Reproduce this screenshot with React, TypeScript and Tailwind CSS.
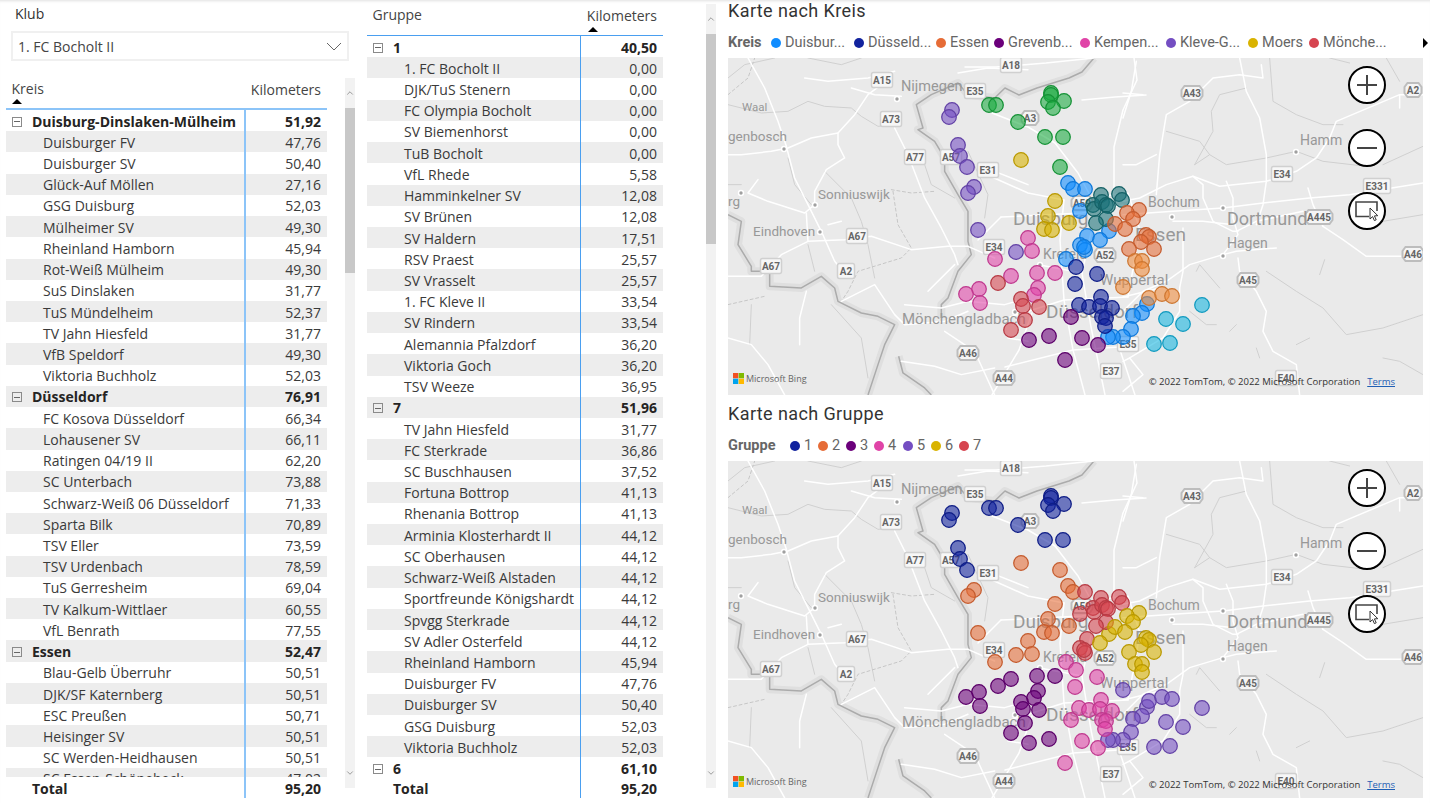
import { Fragment } from 'react';
import { ChevronDown, ChevronUp } from 'lucide-react';

type Row = { name: string; km: string; group?: boolean };

const g = (name: string, km: string): Row => ({ name, km, group: true });
const c = (name: string, km: string): Row => ({ name, km });

const kreisRows: Row[] = [
  g('Duisburg-Dinslaken-Mülheim', '51,92'),
  c('Duisburger FV', '47,76'),
  c('Duisburger SV', '50,40'),
  c('Glück-Auf Möllen', '27,16'),
  c('GSG Duisburg', '52,03'),
  c('Mülheimer SV', '49,30'),
  c('Rheinland Hamborn', '45,94'),
  c('Rot-Weiß Mülheim', '49,30'),
  c('SuS Dinslaken', '31,77'),
  c('TuS Mündelheim', '52,37'),
  c('TV Jahn Hiesfeld', '31,77'),
  c('VfB Speldorf', '49,30'),
  c('Viktoria Buchholz', '52,03'),
  g('Düsseldorf', '76,91'),
  c('FC Kosova Düsseldorf', '66,34'),
  c('Lohausener SV', '66,11'),
  c('Ratingen 04/19 II', '62,20'),
  c('SC Unterbach', '73,88'),
  c('Schwarz-Weiß 06 Düsseldorf', '71,33'),
  c('Sparta Bilk', '70,89'),
  c('TSV Eller', '73,59'),
  c('TSV Urdenbach', '78,59'),
  c('TuS Gerresheim', '69,04'),
  c('TV Kalkum-Wittlaer', '60,55'),
  c('VfL Benrath', '77,55'),
  g('Essen', '52,47'),
  c('Blau-Gelb Überruhr', '50,51'),
  c('DJK/SF Katernberg', '50,51'),
  c('ESC Preußen', '50,71'),
  c('Heisinger SV', '50,51'),
  c('SC Werden-Heidhausen', '50,51'),
  c('SC Essen-Schönebeck', '47,02'),
];

const gruppeRows: Row[] = [
  g('1', '40,50'),
  c('1. FC Bocholt II', '0,00'),
  c('DJK/TuS Stenern', '0,00'),
  c('FC Olympia Bocholt', '0,00'),
  c('SV Biemenhorst', '0,00'),
  c('TuB Bocholt', '0,00'),
  c('VfL Rhede', '5,58'),
  c('Hamminkelner SV', '12,08'),
  c('SV Brünen', '12,08'),
  c('SV Haldern', '17,51'),
  c('RSV Praest', '25,57'),
  c('SV Vrasselt', '25,57'),
  c('1. FC Kleve II', '33,54'),
  c('SV Rindern', '33,54'),
  c('Alemannia Pfalzdorf', '36,20'),
  c('Viktoria Goch', '36,20'),
  c('TSV Weeze', '36,95'),
  g('7', '51,96'),
  c('TV Jahn Hiesfeld', '31,77'),
  c('FC Sterkrade', '36,86'),
  c('SC Buschhausen', '37,52'),
  c('Fortuna Bottrop', '41,13'),
  c('Rhenania Bottrop', '41,13'),
  c('Arminia Klosterhardt II', '44,12'),
  c('SC Oberhausen', '44,12'),
  c('Schwarz-Weiß Alstaden', '44,12'),
  c('Sportfreunde Königshardt', '44,12'),
  c('Spvgg Sterkrade', '44,12'),
  c('SV Adler Osterfeld', '44,12'),
  c('Rheinland Hamborn', '45,94'),
  c('Duisburger FV', '47,76'),
  c('Duisburger SV', '50,40'),
  c('GSG Duisburg', '52,03'),
  c('Viktoria Buchholz', '52,03'),
  g('6', '61,10'),
];

const BLUE = '#118DFF';
const NAVY = '#12239E';
const ORANGE = '#E66C37';
const PURPLE = '#6B007B';
const PINK = '#E044A7';
const VIOLET = '#744EC2';
const GOLD = '#D9B300';
const RED = '#D64550';
const TEAL = '#197278';
const GREEN = '#1AAB40';
const PEACH = '#F08C3C';
const CYAN = '#15B5E0';

// x, y in screen coordinates of the upper map, colour by Kreis, colour by Gruppe
const points: [number, number, string, string][] = [
  [952, 110, VIOLET, NAVY], [949, 117, VIOLET, NAVY], [958, 145, VIOLET, NAVY], [960, 156, VIOLET, NAVY],
  [967, 167, VIOLET, NAVY], [974, 187, VIOLET, ORANGE], [968, 193, VIOLET, ORANGE], [978, 230, VIOLET, ORANGE],
  [1016, 252, VIOLET, ORANGE],
  [1051, 93, GREEN, NAVY], [1051, 95, GREEN, NAVY], [1048, 102, GREEN, NAVY], [1064, 101, GREEN, NAVY],
  [1053, 108, GREEN, NAVY], [989, 105, GREEN, NAVY], [996, 105, GREEN, NAVY], [1018, 122, GREEN, NAVY],
  [1045, 137, GREEN, NAVY], [1063, 137, GREEN, NAVY], [1060, 167, GREEN, ORANGE],
  [1021, 160, GOLD, ORANGE], [1055, 201, GOLD, ORANGE], [1048, 216, GOLD, ORANGE], [1069, 223, GOLD, ORANGE],
  [1044, 229, GOLD, ORANGE], [1052, 230, GOLD, ORANGE],
  [1068, 183, BLUE, ORANGE], [1073, 189, BLUE, ORANGE], [1085, 189, BLUE, RED], [1080, 211, BLUE, RED],
  [1109, 231, BLUE, GOLD], [1087, 236, BLUE, RED], [1100, 240, BLUE, GOLD], [1080, 245, BLUE, RED],
  [1085, 250, BLUE, RED], [1084, 247, BLUE, RED], [1066, 259, BLUE, PINK],
  [1147, 304, BLUE, VIOLET], [1142, 313, BLUE, VIOLET], [1133, 316, BLUE, VIOLET], [1131, 329, BLUE, VIOLET],
  [1123, 337, BLUE, VIOLET], [1113, 337, BLUE, VIOLET], [1108, 337, BLUE, VIOLET],
  [1101, 195, TEAL, RED], [1119, 194, TEAL, RED], [1122, 200, TEAL, RED], [1093, 205, TEAL, RED],
  [1094, 209, TEAL, RED], [1102, 202, TEAL, RED], [1106, 205, TEAL, RED], [1108, 206, TEAL, RED],
  [1106, 219, TEAL, RED], [1096, 223, TEAL, RED],
  [1139, 210, ORANGE, GOLD], [1127, 213, ORANGE, GOLD], [1133, 219, ORANGE, GOLD], [1115, 224, ORANGE, GOLD],
  [1125, 229, ORANGE, GOLD], [1146, 235, ORANGE, GOLD], [1149, 237, ORANGE, GOLD], [1141, 242, ORANGE, GOLD],
  [1129, 249, ORANGE, GOLD], [1154, 249, ORANGE, GOLD],
  [1135, 261, PEACH, GOLD], [1142, 261, PEACH, GOLD], [1142, 269, PEACH, GOLD], [1123, 287, PEACH, VIOLET],
  [1149, 298, PEACH, VIOLET], [1162, 294, PEACH, VIOLET], [1172, 296, PEACH, VIOLET],
  [1202, 305, CYAN, VIOLET], [1166, 319, CYAN, VIOLET], [1183, 324, CYAN, VIOLET], [1154, 344, CYAN, VIOLET],
  [1170, 343, CYAN, VIOLET],
  [1076, 267, NAVY, PINK], [1097, 274, NAVY, PINK], [1075, 284, NAVY, PINK], [1101, 297, NAVY, PINK],
  [1079, 305, NAVY, PINK], [1089, 307, NAVY, PINK], [1100, 306, NAVY, PINK], [1112, 308, NAVY, PINK],
  [1102, 317, NAVY, PINK], [1106, 318, NAVY, PINK], [1105, 326, NAVY, PINK],
  [1071, 317, PURPLE, PINK], [1049, 336, PURPLE, PURPLE], [1029, 340, PURPLE, PURPLE], [1082, 338, PURPLE, PINK],
  [1098, 345, PURPLE, PINK], [1065, 360, PURPLE, PINK],
  [1028, 238, PINK, ORANGE], [1032, 251, PINK, ORANGE], [995, 259, PINK, ORANGE], [1011, 276, PINK, PURPLE],
  [1037, 273, PINK, PURPLE], [1055, 273, PINK, PURPLE], [1038, 288, PINK, PURPLE], [1034, 295, PINK, PURPLE],
  [979, 289, PINK, PURPLE], [966, 294, PINK, PURPLE], [980, 303, PINK, PURPLE],
  [998, 283, RED, PURPLE], [1021, 299, RED, PURPLE], [1023, 306, RED, PURPLE], [1039, 307, RED, PURPLE],
  [1025, 320, RED, PURPLE], [1011, 330, RED, PURPLE],
];

// map lines are traced at 3x: west half starts at 728,58 and east half at 1123,58
const westBorders = [
  '0,470 40,490 30,560 70,625 70,640 125,640 125,685 220,690 280,655 320,690 330,730 400,765 450,775 500,800 470,860 450,920 420,1011',
  '512,895 525,945 590,990 610,1011',
  '1098,0 1062,42 1023,60 927,90 873,111 831,90 800,120 720,110 690,75 610,110 565,140 585,210 570,215 620,250 650,300 650,340 690,410 720,460 720,550 730,590 690,640 660,720 640,740 640,780',
];

const westRoads = [
  '60,0 110,90 150,190 175,265 200,360 240,440 280,520 320,610 345,640',
  '460,80 420,110 380,170 330,225 250,240 180,270 130,280 40,290 0,290',
  '330,225 330,260 350,300 295,335 260,400 260,440',
  '260,440 230,465 120,430 60,405 90,365',
  '0,655 100,655 160,590 240,550 350,545 430,535 550,575 660,565 720,565',
  '500,210 540,290 590,420 640,510 680,590 690,620',
  '235,465 240,550',
  '370,90 440,110 520,115',
  '235,700 215,780 215,860',
  '340,730 440,680 500,770 530,800 650,790 720,760',
  '0,840 70,860 120,920 170,1011',
  '530,740 640,750 720,730 830,740 900,720',
  '600,700 680,620',
  '800,340 900,380',
  '300,500 340,490',
  '520,910 620,925 700,950 800,930',
  '690,45 780,30 900,35',
  '230,60 300,70 420,60 500,40',
  '720,565 800,600',
  '840,840 900,850',
  '650,820 740,880 800,1011',
];

const westThin = [
  '0,140 100,165 180,160 240,130 290,145 370,150 400,175 450,205 520,200',
  '180,300 200,380 250,440',
  '290,340 370,420 400,490 420,560 440,660',
  '70,740 65,860',
  '310,740 400,840 420,960',
  '590,320 610,380 680,420',
  '240,560 260,640',
  '0,380 40,380',
  '720,280 780,410 770,480',
  '0,60 50,20 140,0',
  '240,0 340,20 400,0',
];

const westDashed = [
  '0,110 60,60 80,0',
  '0,740 110,715',
  '490,395 550,405 620,400',
  '495,400 510,500 550,570 520,600 390,640 360,700 340,730',
];

const eastRoads = [
  '350,0 370,100 410,180 430,290 430,370 420,440 400,500',
  '900,110 830,110 640,190 620,240 580,300 520,340 430,370 290,385 210,355 130,380 50,420 0,430',
  '0,470 150,460 300,450 420,435 560,420 680,410 900,375',
  '40,10 25,100 0,180',
  '0,105 60,110',
  '100,410 110,290 130,170 200,130 270,60 350,50 420,60 415,20',
  '0,320 40,320 100,290',
  '210,355 240,380 240,420 270,490 330,520 345,520',
  '310,370 330,420 330,480 345,530 300,590 200,620 130,670 60,700 0,760',
  '180,510 180,640 170,690',
  '300,590 340,580 460,570',
  '340,520 400,490 540,460',
  '600,505 660,545 730,595 840,595',
  '555,390 570,440 600,505',
  '345,600 350,640 400,700 430,760 420,820 450,880 520,920 530,1011',
  '170,690 170,760 120,840 20,900 0,910',
  '150,490 240,490 330,500',
  '830,110 830,150',
  '0,1000 60,950 20,900',
];

const eastThin = [
  '215,320 260,290 310,320 430,300 520,280 600,310 730,325',
  '215,320 270,220 265,160 290,110 370,90',
  '130,220 230,250 260,290',
  '440,0 450,130 520,170 600,200 660,200',
  '430,640 520,700 600,750 670,830 780,810 900,770',
  '220,640 230,620 290,690',
  '780,320 900,265',
  '790,0 830,70',
  '780,490 900,470',
  '200,760 250,800 280,800',
  '780,900 830,910 900,950',
  '400,870 410,900',
  '520,860 560,840',
  '320,820 340,800',
  '590,650 605,605',
  '620,0 680,15',
];

const centerRoads = [
  '1064,200 1060,240 1064,300 1073,350 1085,395',
  '1091,233 1082,273 1091,327 1105,395',
  '1032,313 1019,350 992,395',
  '1010,317 1064,300 1128,297',
  '1005,367 1073,350 1119,347',
  '992,113 1028,127 1055,143 1078,173 1091,197',
  '992,177 1028,193 1064,200',
  '1001,217 1082,213 1123,205',
  '1134,58 1137,80 1123,110 1114,147 1114,187 1113,205',
  '965,67 996,67 1046,63 1094,58',
  '1082,100 1115,97 1146,95',
  '1123,193 1100,197',
  '1128,193 1140,230 1128,297',
  '1119,347 1135,395',
  '978,240 1001,217',
  '1082,273 1040,265',
  '1123,297 1160,288',
];

const shields: [string, number, number, boolean?][] = [
  ['A18', 1011, 65], ['A15', 882, 80], ['E35', 975, 91], ['A3', 1030, 118, true], ['A73', 891, 119],
  ['A77', 915, 157], ['A57', 951, 157], ['E31', 988, 170], ['A43', 1192, 93, true], ['A2', 1413, 90, true],
  ['E34', 1282, 174], ['E331', 1377, 186], ['A59', 1082, 203, true], ['A445', 1319, 217, true], ['A67', 857, 236],
  ['A67', 771, 266], ['A2', 846, 271], ['E34', 994, 247], ['A52', 1105, 255, true], ['A46', 1413, 254, true],
  ['A45', 1248, 280, true], ['A46', 968, 353, true], ['A44', 1004, 378, true], ['E37', 1111, 371],
  ['E35', 1128, 344], ['E40', 1286, 378],
];

const places: [string, number, number, number][] = [
  ['Nijmegen', 901, 91, 14.5],
  ['Waal', 742, 111, 11.5],
  ['genbosch', 728, 141, 13.5],
  ['Sonniuswijk', 818, 199, 13.5],
  ['rg', 728, 206, 13.5],
  ['Eindhoven', 753, 236, 13.5],
  ['Mönchengladbach', 902, 324, 15],
  ['Duisburg', 1013, 225, 19],
  ['Krefeld', 1043, 259, 14],
  ['Düsseldorf', 1046, 318, 19],
  ['Wuppertal', 1100, 285, 15],
  ['Essen', 1135, 241, 19],
  ['Bochum', 1148, 207, 14],
  ['Dortmund', 1227, 225, 18],
  ['Hagen', 1227, 248, 14],
  ['Hamm', 1300, 145, 14],
];

const cityDots: [number, number][] = [
  [897, 99], [784, 149], [741, 193], [815, 205], [820, 232], [1015, 312], [1172, 217], [1223, 208], [1223, 256], [1296, 152], [1040, 265],
];

const kreisLegend = [
  { label: 'Duisbur...', color: BLUE, width: 'w-[83px]' },
  { label: 'Düsseld...', color: NAVY, width: 'w-[82px]' },
  { label: 'Essen', color: ORANGE, width: 'w-[58px]' },
  { label: 'Grevenb...', color: PURPLE, width: 'w-[86px]' },
  { label: 'Kempen...', color: PINK, width: 'w-[86px]' },
  { label: 'Kleve-G...', color: VIOLET, width: 'w-[82px]' },
  { label: 'Moers', color: GOLD, width: 'w-[61px]' },
  { label: 'Mönche...', color: RED, width: 'w-[92px]' },
];

const gruppeLegend = [
  { label: '1', color: NAVY, width: 'w-[28px]' },
  { label: '2', color: ORANGE, width: 'w-[28px]' },
  { label: '3', color: PURPLE, width: 'w-[28px]' },
  { label: '4', color: PINK, width: 'w-[29px]' },
  { label: '5', color: VIOLET, width: 'w-[28px]' },
  { label: '6', color: GOLD, width: 'w-[28px]' },
  { label: '7', color: RED, width: 'w-[28px]' },
];

function Shield({ label, x, y, hex }: { label: string; x: number; y: number; hex?: boolean }) {
  const w = label.length > 3 ? 27 : label.length === 3 ? 21 : 17;
  const l = x - w / 2;
  const r = x + w / 2;
  return (
    <g>
      {hex ? (
        <polygon
          points={`${l + 3},${y - 7} ${r - 3},${y - 7} ${r},${y - 3} ${r},${y + 3} ${r - 3},${y + 7} ${l + 3},${y + 7} ${l},${y + 3} ${l},${y - 3}`}
          fill="#f5f5f5"
          stroke="#bdbdbd"
          strokeWidth="2"
        />
      ) : (
        <rect x={l} y={y - 7.5} width={w} height={15} rx="2" fill="#f7f7f7" stroke="#d0d0d0" strokeWidth="1.5" />
      )}
      <text x={x} y={y + 3.5} textAnchor="middle" fontSize="10" fontWeight="700" fill="#666">
        {label}
      </text>
    </g>
  );
}

function Lines({ list, color, width, dash }: { list: string[]; color: string; width: number; dash?: string }) {
  return (
    <>
      {list.map((p, i) => (
        <polyline key={i} points={p} fill="none" stroke={color} strokeWidth={width} strokeLinejoin="round" strokeLinecap="round" strokeDasharray={dash} />
      ))}
    </>
  );
}

function MapCanvas({ by }: { by: 'kreis' | 'gruppe' }) {
  return (
    <div className="relative h-[337px] w-[695px] overflow-hidden bg-[#eaeaea]">
      <svg viewBox="728 58 695 337" className="block h-[337px] w-[695px] font-['Roboto',sans-serif]">
        <g transform="translate(728 58) scale(0.3333)">
          <Lines list={westThin} color="#d0d0d0" width={3} />
          <Lines list={westDashed} color="#c6c6c6" width={3} dash="9 8" />
          {westBorders.map((p, i) => (
            <Fragment key={i}>
              <polyline points={p} fill="none" stroke="#dfdfdf" strokeWidth="24" strokeLinejoin="round" />
              <polyline points={p} fill="none" stroke="#ababab" strokeWidth="4.5" strokeLinejoin="round" />
            </Fragment>
          ))}
          <Lines list={westRoads} color="#ffffff" width={4.5} />
        </g>
        <g transform="translate(1123 58) scale(0.3333)">
          <Lines list={eastThin} color="#d0d0d0" width={3} />
          <Lines list={eastRoads} color="#ffffff" width={4.5} />
        </g>
        <Lines list={centerRoads} color="#ffffff" width={1.5} />
        {cityDots.map(([x, y], i) => (
          <g key={i}>
            <circle cx={x} cy={y} r="3.2" fill="#fff" />
            <circle cx={x} cy={y} r="1.7" fill="#a0a0a0" />
          </g>
        ))}
        {shields.map(([label, x, y, hex], i) => (
          <Shield key={i} label={label} x={x} y={y} hex={hex} />
        ))}
        {places.map(([label, x, y, size]) => (
          <text key={label} x={x} y={y} fontSize={size} fill="#989898">
            {label}
          </text>
        ))}
        {points.map(([x, y, kreis, gruppe], i) => {
          const color = by === 'kreis' ? kreis : gruppe;
          return (
            <g key={i}>
              <circle cx={x} cy={y} r="7.3" fill={color} fillOpacity="0.58" stroke={color} strokeWidth="1.2" />
              <circle cx={x} cy={y} r="7.3" fill="none" stroke="#000" strokeOpacity="0.15" strokeWidth="1.2" />
            </g>
          );
        })}
      </svg>

      <div className="absolute left-[620px] top-[8px] flex flex-col gap-[25px]">
        <div className="flex h-[38px] w-[38px] items-center justify-center rounded-full border-2 border-black bg-white">
          <svg width="20" height="20" viewBox="0 0 20 20">
            <path d="M10 0v20M0 10h20" stroke="#444" strokeWidth="2" />
          </svg>
        </div>
        <div className="flex h-[38px] w-[38px] items-center justify-center rounded-full border-2 border-black bg-white">
          <svg width="20" height="20" viewBox="0 0 20 20">
            <path d="M0 10h20" stroke="#444" strokeWidth="2" />
          </svg>
        </div>
        <div className="flex h-[38px] w-[38px] items-center justify-center rounded-full border-2 border-black bg-white">
          <svg width="26" height="24" viewBox="0 0 26 24">
            <path d="M15 17.5H2V3h21v9" fill="none" stroke="#444" strokeWidth="1.6" />
            <path d="M16 9l0 11 2.6-2.4 1.8 4 1.8-.8-1.8-3.9 3.4-.2z" fill="#fff" stroke="#333" strokeWidth="1" />
          </svg>
        </div>
      </div>

      <div className="absolute bottom-[10px] left-[5px] flex items-center gap-px font-['Open_Sans',sans-serif] text-[9px] text-[#666]">
        <svg width="11" height="11" viewBox="0 0 11 11" className="mr-px">
          <rect width="5.3" height="5.3" fill="#F25022" />
          <rect x="5.7" width="5.3" height="5.3" fill="#7FBA00" />
          <rect y="5.7" width="5.3" height="5.3" fill="#00A4EF" />
          <rect x="5.7" y="5.7" width="5.3" height="5.3" fill="#FFB900" />
        </svg>
        Microsoft Bing
      </div>
      <div className="absolute bottom-[7px] right-[28px] flex gap-[7px] font-['Open_Sans',sans-serif] text-[9.5px] leading-[12px] text-[#333]">
        <span>© 2022 TomTom, © 2022 Microsoft Corporation</span>
        <span className="text-[#1f5fb5] underline">Terms</span>
      </div>
    </div>
  );
}

function Legend({ title, items, titleWidth, more }: { title: string; items: { label: string; color: string; width: string }[]; titleWidth: string; more?: boolean }) {
  return (
    <div className="flex h-[32px] items-center pt-[2px] font-['Roboto',sans-serif] text-[14.5px] text-[#666]">
      <span className={`${titleWidth} font-bold`}>{title}</span>
      {items.map((item) => (
        <span key={item.label} className={`flex items-center gap-[4px] whitespace-nowrap ${item.width}`}>
          <span className="h-[10px] w-[10px] shrink-0 rounded-full" style={{ backgroundColor: item.color }} />
          {item.label}
        </span>
      ))}
      {more && <span className="ml-auto mr-[2px] h-0 w-0 border-y-[5px] border-l-[5px] border-y-transparent border-l-black" />}
    </div>
  );
}

function ExpandBox() {
  return (
    <span className="mr-[10px] flex h-[10px] w-[10px] shrink-0 items-center justify-center border border-[#8a8a8a]">
      <span className="h-px w-[6px] bg-[#666]" />
    </span>
  );
}

function TableRow({ row, odd, lineClass, nameWidth }: { row: Row; odd: boolean; lineClass: string; nameWidth: string }) {
  return (
    <div className={`flex h-[21.22px] shrink-0 text-[14px] leading-[20px] ${odd ? 'bg-[#ededed]' : 'bg-white'}`}>
      <div className={`flex h-full items-center pt-[2px] ${nameWidth} ${row.group ? 'pl-[6px] font-bold text-[#252423]' : 'pl-[37px] text-[#3a3a3a]'}`}>
        {row.group && <ExpandBox />}
        <span className="whitespace-nowrap">{row.name}</span>
      </div>
      <div className={`h-full ${lineClass}`} />
      <div className={`flex flex-1 items-center justify-end pr-[6px] pt-[2px] ${row.group ? 'font-bold text-[#252423]' : 'text-[#3a3a3a]'}`}>{row.km}</div>
    </div>
  );
}

function SortMark() {
  return <span className="block h-0 w-0 border-x-[5px] border-b-[5px] border-x-transparent border-b-black" />;
}

function DataTable({
  rows,
  label,
  sortOn,
  total,
  width,
  nameWidth,
  lineClass,
  ruleClass,
  bodyHeight,
}: {
  rows: Row[];
  label: string;
  sortOn: 'name' | 'km';
  total: string;
  width: string;
  nameWidth: string;
  lineClass: string;
  ruleClass: string;
  bodyHeight: string;
}) {
  return (
    <div className={`flex flex-col ${width} font-['Open_Sans',sans-serif]`}>
      <div className={`flex h-[32px] items-start text-[14px] leading-[20px] text-[#444] ${ruleClass}`}>
        <div className={`${nameWidth} pl-[5.5px] pt-[1px]`}>
          {label}
          {sortOn === 'name' && <SortMark />}
        </div>
        <div className="flex flex-1 flex-col items-end pr-[6px] pt-[2px]">
          Kilometers
          {sortOn === 'km' && (
            <span className="mr-[59px] mt-[1px]">
              <SortMark />
            </span>
          )}
        </div>
      </div>
      <div className={`flex ${bodyHeight} flex-col overflow-hidden`}>
        {rows.map((row, i) => (
          <TableRow key={`${row.name}-${i}`} row={row} odd={i % 2 === 1} lineClass={lineClass} nameWidth={nameWidth} />
        ))}
      </div>
      <div className="flex h-[21px] text-[14px] font-bold text-[#252423]">
        <div className={`${nameWidth} flex items-center pl-[26px] pt-[2px]`}>Total</div>
        <div className={`h-full ${lineClass}`} />
        <div className="flex flex-1 items-center justify-end pr-[6px] pt-[2px]">{total}</div>
      </div>
    </div>
  );
}

function ScrollBar({ height, thumb }: { height: string; thumb: string }) {
  return (
    <div className={`flex ${height} w-[10px] flex-col bg-[#f2f2f2] text-[#666]`}>
      <div className="flex h-[30px] items-center justify-center">
        <ChevronUp size={10} strokeWidth={1.5} />
      </div>
      <div className={`${thumb} bg-[#c8c8c8]`} />
      <div className="flex flex-1 items-end justify-center pb-[10px]">
        <ChevronDown size={10} strokeWidth={1.5} />
      </div>
    </div>
  );
}

export default function App() {
  return (
    <div className="flex h-[803px] w-[1430px] overflow-hidden bg-white shadow-[inset_0_3px_3px_-2px_rgba(0,0,0,0.12)]">
      <div className="flex w-[367px] shrink-0 flex-col pl-[6px]">
        <div className="pl-[9px] pt-[4px] font-['Open_Sans',sans-serif] text-[14px] leading-[20px] text-[#333]">Klub</div>
        <div className="ml-[5px] mt-[7px] flex h-[30px] w-[338px] items-center justify-between border-2 border-[#f0f0f0] pl-[5px] pr-[5px] font-['Open_Sans',sans-serif] text-[14px] text-[#444]">
          1. FC Bocholt II
          <svg width="16" height="9" viewBox="0 0 16 9">
            <path d="M1 1l7 7 7-7" fill="none" stroke="#666" strokeWidth="1" />
          </svg>
        </div>
        <div className="mt-[17px] flex gap-[18px]">
          <DataTable
            rows={kreisRows}
            label="Kreis"
            sortOn="name"
            total="95,20"
            width="w-[321px]"
            nameWidth="w-[238px]"
            lineClass="w-[2px] bg-[#8cc4f8]"
            ruleClass="border-b-2 border-[#8cc4f8]"
            bodyHeight="h-[667px]"
          />
          <ScrollBar height="h-[710px]" thumb="h-[165px]" />
        </div>
      </div>

      <div className="flex w-[361px] shrink-0 gap-[43px] pt-[4px]">
        <DataTable
          rows={gruppeRows}
          label="Gruppe"
          sortOn="km"
          total="95,20"
          width="w-[296px]"
          nameWidth="w-[213px]"
          lineClass="w-px bg-[#4a9ff0]"
          ruleClass="border-b border-[#4a9ff0]"
          bodyHeight="h-[741px]"
        />
        <ScrollBar height="h-[784px]" thumb="h-[210px]" />
      </div>

      <div className="flex flex-1 flex-col">
        <h2 className="h-[26px] font-['Roboto',sans-serif] text-[18px] font-normal leading-[22px] tracking-[0.4px] text-[#333]">Karte nach Kreis</h2>
        <Legend title="Kreis" items={kreisLegend} titleWidth="w-[43px]" more />
        <MapCanvas by="kreis" />
        <h2 className="mt-[8px] h-[26px] font-['Roboto',sans-serif] text-[18px] font-normal leading-[22px] tracking-[0.4px] text-[#333]">Karte nach Gruppe</h2>
        <Legend title="Gruppe" items={gruppeLegend} titleWidth="w-[62px]" />
        <MapCanvas by="gruppe" />
      </div>
    </div>
  );
}
